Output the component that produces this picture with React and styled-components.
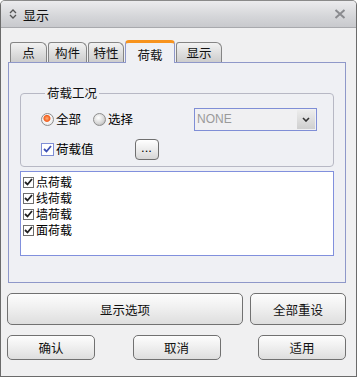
import React from "react";
import styled, { createGlobalStyle, css } from "styled-components";

const Global = createGlobalStyle`
  html, body { margin: 0; padding: 0; background: #ffffff; }
  body { font-family: "Noto Sans CJK SC", "Noto Sans", sans-serif; font-size: 12px; color: #000; }
  * { box-sizing: border-box; }
`;

const Window = styled.div`
  width: 357px;
  height: 377px;
  display: flex;
  flex-direction: column;
  border: 1px solid #6b6b6b;
  border-top-color: #8a8a8a;
  border-radius: 5px 5px 0 0;
  background: #f0f0f1;
  overflow: hidden;
`;

const TitleBar = styled.div`
  height: 27px;
  flex: none;
  display: flex;
  align-items: center;
  padding: 0 8px 0 8px;
  background: linear-gradient(#ececee, #d6d7da 55%, #c8c9cd);
  border-bottom: 1px solid #a8a9ad;
`;

const TitleText = styled.span`
  margin-left: 6px;
  font-size: 13px;
  line-height: 1;
  color: #111;
  flex: 1;
`;

const Body = styled.div`
  flex: 1;
  display: flex;
  flex-direction: column;
  padding: 13px 10px 0 7px;
`;

const TabRow = styled.div`
  display: flex;
  align-items: flex-end;
  height: 21px;
  padding-left: 2px;
  position: relative;
  z-index: 1;
`;

const Tab = styled.div`
  height: 20px;
  width: ${(p) => p.w}px;
  margin-right: 1px;
  display: flex;
  align-items: center;
  justify-content: center;
  font-size: 12.5px;
  color: #111;
  border: 1px solid #858585;
  border-bottom: none;
  border-radius: 3px 6px 0 0;
  background: linear-gradient(#f2f2f2, #d8d8d8 70%, #cdcdcd);
  ${(p) =>
    p.active &&
    css`
      height: 23px;
      margin-bottom: -1px;
      background: #eff0f4;
      border: 1px solid #8f98c9;
      border-top: 3px solid #f7931e;
      border-bottom: none;
      border-radius: 4px 4px 0 0;
      padding-top: 2px;
    `}
`;

const Panel = styled.div`
  height: 221px;
  background: #eff0f4;
  border: 1px solid #8f98c9;
  display: flex;
  flex-direction: column;
  padding: 23px 11px 0 11px;
`;

const GroupBox = styled.fieldset`
  margin: 0;
  height: 81px;
  border: 1px solid #b7b8c4;
  border-radius: 4px;
  padding: 0 0 0 20px;
  display: flex;
  flex-direction: column;
`;

const Legend = styled.legend`
  padding: 0 2px;
  margin-left: 4px;
  font-size: 12.5px;
  line-height: 14px;
  color: #111;
`;

const OptRow = styled.div`
  display: flex;
  align-items: center;
  height: 22px;
  line-height: 16px;
  margin-top: ${(p) => p.mt || 0}px;
`;

const Radio = styled.span`
  width: 13px;
  height: 13px;
  border-radius: 50%;
  flex: none;
  border: 1px solid #8d8d8d;
  background: radial-gradient(circle at 40% 35%, #ffffff, #d4d4d4 60%, #9d9d9d);
  ${(p) =>
    p.checked &&
    css`
      background: radial-gradient(circle at 45% 40%, #ffb07a 0, #f25d1d 3px, #f7f7f7 4px, #dcdcdc 100%);
    `}
`;

const OptLabel = styled.span`
  margin-left: 2px;
  font-size: 12.5px;
  margin-right: ${(p) => p.mr || 0}px;
`;

const Select = styled.div`
  margin-left: 61px;
  width: 123px;
  height: 23px;
  border: 1px solid #7f8ed6;
  background: #f0f0f2;
  display: flex;
  align-items: center;
  padding: 0 1px 0 2px;
  font-family: "Liberation Sans", Arial, sans-serif;
  font-size: 12px;
  color: #9a9a9a;
`;

const SelectText = styled.span`
  flex: 1;
`;

const SelectBtn = styled.span`
  width: 18px;
  height: 19px;
  background: linear-gradient(#ececec, #cfcfcf);
  display: flex;
  align-items: center;
  justify-content: center;
`;

const Check = styled.span`
  width: ${(p) => p.size || 13}px;
  height: ${(p) => p.size || 13}px;
  flex: none;
  border: 1px solid ${(p) => p.bc || "#8d8d8d"};
  background: #fff;
  display: flex;
  align-items: center;
  justify-content: center;
`;

const SmallButton = styled.div`
  margin-left: 41px;
  width: 24px;
  height: 21px;
  border: 1px solid #6f6f6f;
  border-radius: 4px;
  background: linear-gradient(#ffffff, #e8e8e8 60%, #d6d6d6);
  display: flex;
  align-items: center;
  justify-content: center;
  font-family: "Liberation Sans", Arial, sans-serif;
  font-size: 13px;
  line-height: 1;
  padding-bottom: 3px;
`;

const ListBox = styled.div`
  margin-top: 4px;
  height: 85px;
  background: #ffffff;
  border: 1px solid #8190dd;
  padding: 2px 0 0 2px;
  display: flex;
  flex-direction: column;
`;

const ListItem = styled.div`
  height: 16px;
  line-height: 16px;
  display: flex;
  align-items: center;
  font-size: 12px;
  gap: 2px;
`;

const ButtonRow = styled.div`
  display: flex;
  justify-content: space-between;
  margin: ${(p) => p.m};
  margin-left: -1px;
`;

const Button = styled.div`
  width: ${(p) => p.w}px;
  height: ${(p) => p.h}px;
  border: 1px solid #717171;
  border-radius: 5px;
  background: linear-gradient(#fdfdfd, #f0f0f0 45%, #dedede);
  display: flex;
  align-items: center;
  justify-content: center;
  font-size: 12.5px;
  color: #111;
`;

const Tick = ({ color = "#222" }) => (
  <svg width="9" height="8" viewBox="0 0 9 8">
    <path d="M1 4 L3.5 6.5 L8 1" fill="none" stroke={color} strokeWidth="1.8" />
  </svg>
);

export default function App() {
  return (
    <>
      <Global />
      <Window>
        <TitleBar>
          <svg width="8" height="10" viewBox="0 0 8 10">
            <path d="M1 4 L4 1 L7 4" fill="none" stroke="#555" strokeWidth="1.3" />
            <path d="M1 6 L4 9 L7 6" fill="none" stroke="#555" strokeWidth="1.3" />
          </svg>
          <TitleText>显示</TitleText>
          <svg width="12" height="10" viewBox="0 0 12 10" style={{ marginRight: 2 }}>
            <path d="M1.5 1 L10.5 9 M10.5 1 L1.5 9" stroke="#8a8b8f" strokeWidth="2" />
          </svg>
        </TitleBar>
        <Body>
          <TabRow>
            <Tab w={37}>点</Tab>
            <Tab w={39}>构件</Tab>
            <Tab w={36}>特性</Tab>
            <Tab w={50} active>
              荷载
            </Tab>
            <Tab w={46}>显示</Tab>
          </TabRow>
          <Panel>
            <GroupBox>
              <Legend>荷载工况</Legend>
              <OptRow mt={8}>
                <Radio checked />
                <OptLabel mr={12}>全部</OptLabel>
                <Radio />
                <OptLabel>选择</OptLabel>
                <Select>
                  <SelectText>NONE</SelectText>
                  <SelectBtn>
                    <svg width="8" height="5" viewBox="0 0 8 5">
                      <path d="M1 1 L4 4 L7 1" fill="none" stroke="#333" strokeWidth="1.6" />
                    </svg>
                  </SelectBtn>
                </Select>
              </OptRow>
              <OptRow mt={8}>
                <Check bc="#7f8ed6">
                  <Tick color="#3c4fb4" />
                </Check>
                <OptLabel>荷载值</OptLabel>
                <SmallButton>...</SmallButton>
              </OptRow>
            </GroupBox>
            <ListBox>
              {["点荷载", "线荷载", "墙荷载", "面荷载"].map((t) => (
                <ListItem key={t}>
                  <Check size={11} bc="#6e6e6e">
                    <Tick />
                  </Check>
                  {t}
                </ListItem>
              ))}
            </ListBox>
          </Panel>
          <ButtonRow m="10px 0 0 0">
            <Button w={236} h={32}>显示选项</Button>
            <Button w={96} h={32}>全部重设</Button>
          </ButtonRow>
          <ButtonRow m="10px 0 0 0">
            <Button w={88} h={25}>确认</Button>
            <Button w={88} h={25}>取消</Button>
            <Button w={88} h={25}>适用</Button>
          </ButtonRow>
        </Body>
      </Window>
    </>
  );
}
